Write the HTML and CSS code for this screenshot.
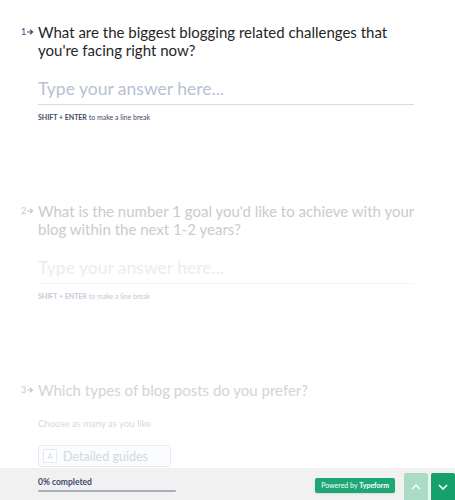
FILE: index.html
```html
<!DOCTYPE html>
<html lang="en">
<head>
    <meta charset="UTF-8">
    <meta name="viewport" content="width=device-width, initial-scale=1.0">
    <title>Blogging survey</title>
    <link rel="stylesheet" href="styles.css">
</head>
<body>
    <div class="form">
        <section class="question">
            <div class="title">
                <span class="num">1<svg class="arrow" width="7" height="6" viewBox="0 0 7 6"><path d="M0 3h5M3 0.8L5.6 3 3 5.2" fill="none" stroke="currentColor" stroke-width="1.2"/></svg></span>
                <h2>What are the biggest blogging related challenges that you're facing right now?</h2>
            </div>
            <div class="answer">
                <div class="field">Type your answer here...</div>
                <p class="hint"><b>SHIFT + ENTER</b> to make a line break</p>
            </div>
        </section>

        <section class="question faded">
            <div class="title">
                <span class="num">2<svg class="arrow" width="7" height="6" viewBox="0 0 7 6"><path d="M0 3h5M3 0.8L5.6 3 3 5.2" fill="none" stroke="currentColor" stroke-width="1.2"/></svg></span>
                <h2>What is the number 1 goal you'd like to achieve with your blog within the next 1-2 years?</h2>
            </div>
            <div class="answer">
                <div class="field">Type your answer here...</div>
                <p class="hint"><b>SHIFT + ENTER</b> to make a line break</p>
            </div>
        </section>

        <section class="question faded more">
            <div class="title">
                <span class="num">3<svg class="arrow" width="7" height="6" viewBox="0 0 7 6"><path d="M0 3h5M3 0.8L5.6 3 3 5.2" fill="none" stroke="currentColor" stroke-width="1.2"/></svg></span>
                <h2>Which types of blog posts do you prefer?</h2>
            </div>
            <div class="answer">
                <p class="sub">Choose as many as you like</p>
                <div class="choice"><span class="key">A</span>Detailed guides</div>
            </div>
        </section>
    </div>

    <footer class="bar">
        <div class="progress">
            <span class="label">0% completed</span>
            <div class="track"></div>
        </div>
        <a class="brand">Powered by <b>Typeform</b></a>
        <div class="nav">
            <button class="up" aria-label="Previous">
                <svg width="10" height="6" viewBox="0 0 10 6"><path d="M1 5l4-4 4 4" fill="none" stroke="#fff" stroke-width="1.4"/></svg>
            </button>
            <button class="down" aria-label="Next">
                <svg width="10" height="6" viewBox="0 0 10 6"><path d="M1 1l4 4 4-4" fill="none" stroke="#fff" stroke-width="1.6"/></svg>
            </button>
        </div>
    </footer>
</body>
</html>
```

FILE: styles.css
```css
html, body {
    height: 100%;
}
body {
    margin: 0;
    font-family: Lato, "Open Sans", Arial, sans-serif;
    background-color: #fff;
    color: #262627;
    overflow: hidden;
}
.form {
    padding: 0 41px 0 21px;
}
.question {
    padding-top: 23px;
    height: 156px;
}
.title {
    display: flex;
}
.num {
    width: 17px;
    flex-shrink: 0;
    font-size: 9px;
    line-height: 18px;
    color: #3d4a6b;
}
.arrow {
    margin-left: 1px;
    vertical-align: 0;
}
h2 {
    margin: 0;
    font-size: 15px;
    font-weight: normal;
    line-height: 18px;
}
.answer {
    padding-left: 17px;
}
.field {
    margin-top: 18px;
    padding-bottom: 3px;
    font-size: 17.5px;
    line-height: 24px;
    color: #b8c1d3;
    border-bottom: 1px solid #d7dce6;
}
.hint {
    margin: 8px 0 0;
    font-size: 7px;
    color: #3d4a6b;
}
.faded h2 {
    color: #c9cbcf;
}
.faded .num {
    color: #c3c8d4;
}
.faded .field {
    color: #e9edf3;
    border-bottom-color: #f2f4f7;
}
.faded .hint {
    color: #c5cad6;
}
.more h2 {
    color: #d2d4d8;
}
.sub {
    margin: 19px 0 0;
    font-size: 9.5px;
    color: #d6d9de;
}
.choice {
    display: flex;
    align-items: center;
    gap: 6px;
    width: 133px;
    height: 22px;
    margin-top: 16px;
    padding: 0 4px;
    box-sizing: border-box;
    font-size: 12.5px;
    color: #d3d8e2;
    background-color: #fbfcfd;
    border: 1px solid #e7ebf1;
    border-radius: 3px;
}
.key {
    width: 12px;
    height: 12px;
    font-size: 7px;
    line-height: 12px;
    text-align: center;
    border: 1px solid #e4e8ef;
    background-color: #fff;
    border-radius: 1px;
}
.bar {
    position: fixed;
    left: 0;
    right: 0;
    bottom: 0;
    height: 32px;
    display: flex;
    align-items: center;
    padding-left: 38px;
    background-color: #f1f1f1;
}
.progress {
    width: 138px;
    margin-top: 1px;
}
.label {
    display: block;
    font-size: 8.5px;
    font-weight: bold;
    line-height: 10px;
    color: #3d4a6b;
}
.track {
    height: 2px;
    margin-top: 3px;
    background-color: #a8b0c0;
    border-radius: 1px;
}
.brand {
    margin-left: auto;
    margin-top: 2px;
    padding: 0 6px;
    height: 15px;
    line-height: 15px;
    font-size: 7px;
    color: #fff;
    background-color: #1ea776;
    border-radius: 2px;
    box-shadow: 0 1px 2px rgba(0,0,0,0.1);
}
.nav {
    display: flex;
    gap: 3px;
    margin-left: 9px;
    align-self: flex-end;
}
.nav button {
    width: 24px;
    height: 27px;
    padding: 0;
    border: none;
    border-radius: 2px 2px 0 0;
    display: flex;
    align-items: center;
    justify-content: center;
    cursor: pointer;
}
.up {
    background-color: #a9dbc5;
}
.down {
    background-color: #15a06c;
}
```
